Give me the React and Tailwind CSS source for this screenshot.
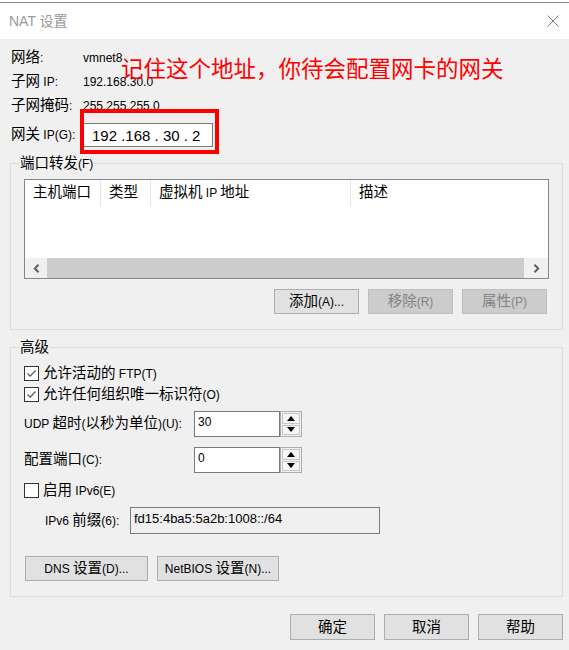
import React from 'react';

// CJK runs render larger than latin text, like the dialog's mixed fonts
const CJK = /([\u2e80-\u9fff\u3000-\u303f\uff00-\uffef]+)/;

const T = ({ children }) => (
  <span>
    {String(children)
      .split(CJK)
      .filter(Boolean)
      .map((part, i) =>
        CJK.test(part) ? (
          <span key={i} className="text-[14.5px]">
            {part}
          </span>
        ) : (
          <span key={i}>{part}</span>
        )
      )}
  </span>
);

const Btn = ({ children, disabled, className = '' }) => (
  <div
    className={`flex items-center justify-center border leading-none ${
      disabled
        ? 'bg-[#cccccc] border-[#bfbfbf] text-[#838383]'
        : 'bg-[#e1e1e1] border-[#adadad] text-black'
    } ${className}`}>
    <T>{children}</T>
  </div>
);

const CheckBox = ({ checked, label }) => (
  <div className="flex items-center gap-[4px]">
    <div className="w-[15px] h-[15px] border border-[#333333] bg-white flex items-center justify-center">
      {checked && (
        <svg width="11" height="11" viewBox="0 0 11 11">
          <polyline
            points="1.5,5.5 4.2,8.2 9.5,2.5"
            fill="none"
            stroke="#555"
            strokeWidth="1.2"
          />
        </svg>
      )}
    </div>
    <span className="leading-[16px]">
      <T>{label}</T>
    </span>
  </div>
);

const Spinner = ({ value }) => (
  <div className="flex h-[26px]">
    <div className="w-[86px] h-full border border-[#7a7a7a] bg-white pl-[3px] pt-[1px] leading-[18px]">
      {value}
    </div>
    <div className="w-[22px] h-full border border-[#adadad] bg-[#f0f0f0] flex flex-col gap-px p-px">
      <div className="flex-1 bg-[#f5f5f5] border border-[#c8c8c8] flex items-center justify-center">
        <svg width="8" height="5" viewBox="0 0 8 5">
          <polygon points="0,5 4,0 8,5" fill="#000" />
        </svg>
      </div>
      <div className="flex-1 bg-[#f5f5f5] border border-[#c8c8c8] flex items-center justify-center">
        <svg width="8" height="5" viewBox="0 0 8 5">
          <polygon points="0,0 8,0 4,5" fill="#000" />
        </svg>
      </div>
    </div>
  </div>
);

const columns = [
  { label: '主机端口', w: 'w-[76px]' },
  { label: '类型', w: 'w-[50px]' },
  { label: '虚拟机 IP 地址', w: 'w-[200px]' },
  { label: '描述', w: 'flex-1' },
];

const info = [
  { label: '网络:', value: 'vmnet8', h: 'h-[24px]' },
  { label: '子网 IP:', value: '192.168.30.0', h: 'h-[24px]' },
  { label: '子网掩码:', value: '255.255.255.0', h: 'h-[23px]' },
];

export default function App() {
  return (
    <div className="w-[569px] h-[650px] overflow-hidden bg-[#f0f0f0] text-black text-[12px] font-['Liberation_Sans','Noto_Sans_CJK_SC',sans-serif]">
      {/* window behind */}
      <div className="h-[3px] bg-white border-b border-[#8a8a8a]" />

      {/* title bar */}
      <div className="h-[36px] bg-white flex items-center justify-between pl-[9px] pr-[10px]">
        <span className="text-[14px] text-[#999999] leading-none">NAT 设置</span>
        <svg width="12" height="12" viewBox="0 0 12 12">
          <path d="M0.5 0.5 L11.5 11.5 M11.5 0.5 L0.5 11.5" stroke="#777" strokeWidth="1" />
        </svg>
      </div>

      <div className="pl-[10px] pr-[6px]">
        {/* network info */}
        <div className="relative pt-[7px]">
          {info.map((row) => (
            <div key={row.label} className={`flex ${row.h} items-center pl-[1px]`}>
              <span className="w-[72px]">
                <T>{row.label}</T>
              </span>
              <span>{row.value}</span>
            </div>
          ))}
          <div className="flex h-[24px] items-center mt-[6px] pl-[1px]">
            <span className="w-[72px]">
              <T>网关 IP(G):</T>
            </span>
            <div className="w-[130px] h-[24px] border border-[#7a7a7a] bg-white pl-[8px] flex items-center text-[15px] whitespace-pre leading-none">
              192 .168 . 30 . 2
            </div>
          </div>

          {/* annotation */}
          <div className="absolute left-[70px] top-[70px] w-[139px] h-[45px] border-[4px] border-[#ff0000]" />
          <div className="absolute left-[111px] top-[20px] text-[22.5px] leading-none text-[#ff0000] whitespace-nowrap">
            记住这个地址，你待会配置网卡的网关
          </div>
        </div>

        {/* port forwarding */}
        <fieldset className="mt-[8px] border border-[#dcdcdc] px-[13px] pb-[15px]">
          <legend className="ml-[-5px] px-[1px] h-[16px] leading-[16px]">
            <T>端口转发(F)</T>
          </legend>
          <div className="mt-[8px] h-[100px] border border-[#828790] bg-white flex flex-col">
            <div className="flex h-[26px] items-center">
              {columns.map((c, i) => (
                <div
                  key={c.label}
                  className={`${c.w} h-full flex items-center pl-[8px] ${
                    i < columns.length - 1 ? 'border-r border-[#e5e5e5]' : ''
                  }`}>
                  <T>{c.label}</T>
                </div>
              ))}
            </div>
            <div className="flex-1" />
            <div className="h-[20px] flex bg-[#f0f0f0]">
              <div className="w-[22px] flex items-center justify-center">
                <svg width="7" height="9" viewBox="0 0 7 9">
                  <polyline points="5.5,0.8 1.8,4.5 5.5,8.2" fill="none" stroke="#606060" strokeWidth="2" />
                </svg>
              </div>
              <div className="flex-1 bg-[#cdcdcd]" />
              <div className="w-[24px] flex items-center justify-center">
                <svg width="7" height="9" viewBox="0 0 7 9">
                  <polyline points="1.5,0.8 5.2,4.5 1.5,8.2" fill="none" stroke="#606060" strokeWidth="2" />
                </svg>
              </div>
            </div>
          </div>
          <div className="mt-[10px] flex justify-end gap-[9px] pr-[2px]">
            <Btn className="w-[85px] h-[25px]">添加(A)...</Btn>
            <Btn disabled className="w-[85px] h-[25px]">移除(R)</Btn>
            <Btn disabled className="w-[85px] h-[25px]">属性(P)</Btn>
          </div>
        </fieldset>

        {/* advanced */}
        <fieldset className="mt-[9px] border border-[#dcdcdc] px-[13px] pb-[15px]">
          <legend className="ml-[-5px] px-[1px] h-[16px] leading-[16px]">
            <T>高级</T>
          </legend>
          <div className="pt-[7px]">
            <div className="h-[22px] flex items-center">
              <CheckBox checked label="允许活动的 FTP(T)" />
            </div>
            <div className="h-[21px] flex items-center">
              <CheckBox checked label="允许任何组织唯一标识符(O)" />
            </div>
            <div className="mt-[6px] flex items-center">
              <span className="w-[170px]">
                <T>UDP 超时(以秒为单位)(U):</T>
              </span>
              <Spinner value="30" />
            </div>
            <div className="mt-[10px] flex items-center">
              <span className="w-[170px]">
                <T>配置端口(C):</T>
              </span>
              <Spinner value="0" />
            </div>
            <div className="mt-[6px] h-[22px] flex items-center">
              <CheckBox label="启用 IPv6(E)" />
            </div>
            <div className="mt-[6px] flex items-center pl-[21px]">
              <span className="w-[85px]">
                <T>IPv6 前缀(6):</T>
              </span>
              <div className="w-[250px] h-[27px] border border-[#7a7a7a] bg-[#f0f0f0] pl-[3px] pt-[2px] leading-[18px] text-[13px]">
                fd15:4ba5:5a2b:1008::/64
              </div>
            </div>
            <div className="mt-[22px] flex gap-[9px] pl-[1px]">
              <Btn className="w-[123px] h-[25px]">DNS 设置(D)...</Btn>
              <Btn className="w-[122px] h-[25px]">NetBIOS 设置(N)...</Btn>
            </div>
          </div>
        </fieldset>

        {/* dialog buttons */}
        <div className="mt-[17px] flex justify-end gap-[9px]">
          <Btn className="w-[85px] h-[26px]">确定</Btn>
          <Btn className="w-[85px] h-[26px]">取消</Btn>
          <Btn className="w-[85px] h-[26px]">帮助</Btn>
        </div>
      </div>
    </div>
  );
}
